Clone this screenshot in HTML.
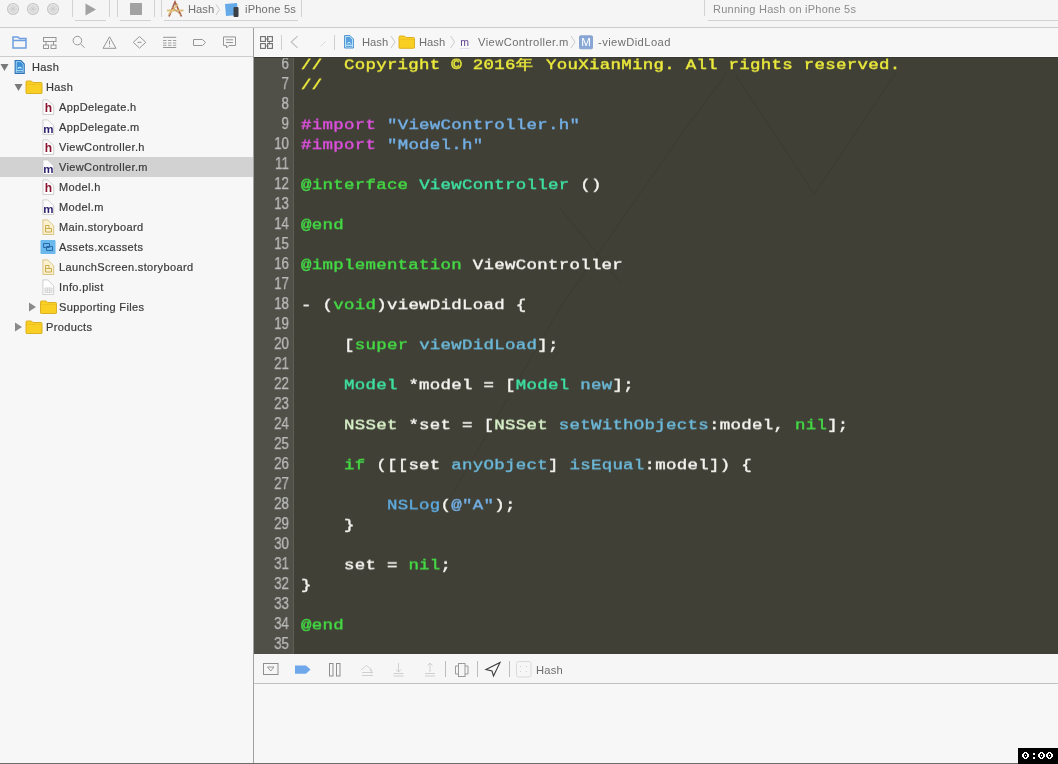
<!DOCTYPE html>
<html><head><meta charset="utf-8">
<style>
*{margin:0;padding:0;box-sizing:border-box}
html,body{width:1058px;height:764px;overflow:hidden;background:#f6f6f6;font-family:"Liberation Sans",sans-serif;position:relative;-webkit-font-smoothing:antialiased}
.t,.ln,.code{will-change:transform}
.abs{position:absolute}
svg{position:absolute;left:0;top:0}
#toolbar{left:0;top:0;width:1058px;height:28px;background:#f5f5f5;border-bottom:1px solid #cbcbcb}
#tabs{left:0;top:28px;width:253px;height:29px;background:#f6f6f6;border-bottom:1px solid #cdcdcd}
#jump{left:254px;top:28px;width:804px;height:29px;background:#f7f7f7;border-bottom:1px solid #fbfbfb}
#nav{left:0;top:57px;width:253px;height:706px;background:#f7f7f7}
#sel{left:0;top:157px;width:253px;height:20px;background:#d2d2d2}
#vdiv{left:253px;top:28px;width:1px;height:736px;background:#a2a2a2}
#editor{left:254px;top:57px;width:804px;height:597px;background:#404037;overflow:hidden;border-top:1px solid #393933}
#gutter{left:0;top:-1px;width:40px;height:598px;background:#505048;border-right:1px solid #5e5d56}
#debugbar{left:254px;top:654px;width:804px;height:30px;background:#f6f6f6;border-bottom:1px solid #c1c1c1}
#console{left:254px;top:684px;width:804px;height:79px;background:#f7f7f7}
#bottomline{left:0;top:763px;width:1058px;height:1px;background:#6c6c6c}
.t{position:absolute;font-size:11px;color:#3b3b3b;white-space:pre;line-height:14px}
.nv{letter-spacing:0.37px;color:#3a3a3a;-webkit-text-stroke:0.2px currentColor}
.ln{position:absolute;left:0;font-size:15.6px;color:#bababa;line-height:20px;text-align:right;width:35px;white-space:pre;-webkit-text-stroke:0.25px currentColor;transform:scaleX(0.86);transform-origin:35px 0}
.code{position:absolute;left:47px;font-family:"Liberation Mono",monospace;font-size:17.4px;letter-spacing:0.3px;line-height:22.988505747126435px;color:#f4f4f0;white-space:pre;font-weight:normal;-webkit-text-stroke:0.5px currentColor;transform:scaleY(0.87);transform-origin:0 0}
.cm{color:#ecea3c}.pp{color:#dc50dc}.st{color:#74b0e6}.kw{color:#44da44}.cl{color:#3ee0a0}.sc{color:#d8f0c8}.fn{color:#6cb8d8}.nl{color:#5eaade}
#timer{left:1018px;top:748px;width:40px;height:16px;background:#000}
</style></head><body>
<div id="toolbar" class="abs"></div>
<svg width="1058" height="28" viewBox="0 0 1058 28">
  <g fill="#e4e4e4" stroke="#c6c6c6" stroke-width="1.1">
    <circle cx="13" cy="9" r="5.5"/><circle cx="33" cy="9" r="5.5"/><circle cx="53" cy="9" r="5.5"/>
  </g>
  <g stroke="#cdcdcd" stroke-width="0.9" fill="none">
    <path d="M13 5 V13 M9 9 H17 M10.2 6.2 L15.8 11.8 M15.8 6.2 L10.2 11.8"/>
    <path d="M33 5 V13 M29 9 H37 M30.2 6.2 L35.8 11.8 M35.8 6.2 L30.2 11.8"/>
    <path d="M53 5 V13 M49 9 H57 M50.2 6.2 L55.8 11.8 M55.8 6.2 L50.2 11.8"/>
  </g>
  <g fill="none" stroke="#d2d2d2" stroke-width="1">
    <path d="M72.5 0 V17 M109.5 0 V17 M75 20.5 H106" />
    <path d="M117.5 0 V17 M154.5 0 V17 M120 20.5 H151"/>
    <path d="M161.5 0 V17 M301.5 0 V17 M164 20.5 H298"/>
    <path d="M704.5 0 V16"/><path d="M708 20.5 H1058"/>
  </g>
  <path d="M85.5 3.5 V15.5 L96 9.5 Z" fill="#a2a2a2"/>
  <rect x="130" y="3" width="12" height="12" fill="#a2a2a2"/>
  <!-- app icon -->
  <g transform="translate(167,1)">
    <path d="M2 15.5 L8 1 L14.5 15.5" fill="none" stroke="#a8604a" stroke-width="1.7"/>
    <path d="M0 9.5 H16.5" stroke="#dcb870" stroke-width="1.8"/>
    <path d="M1.5 13.5 L11 3" stroke="#e0c078" stroke-width="1.4"/>
    <path d="M5 6 L14 14" stroke="#c08a60" stroke-width="1"/>
  </g>
  <path d="M216 4.5 L219.5 9.5 L216 15" fill="none" stroke="#c4c4c4" stroke-width="0.9"/>
  <g transform="translate(224,3)">
    <path d="M1 1 L13 0 L14 12 L2 13 Z" fill="#64a9e8"/>
    <rect x="9.5" y="4" width="5" height="10" rx="1" fill="#3b3f46"/>
  </g>
</svg>
<div class="t" style="left:187.5px;top:2.3px;color:#6f6f6f;font-size:11.2px">Hash</div>
<div class="t" style="left:244.5px;top:2.3px;color:#6f6f6f;font-size:11.2px;letter-spacing:0.15px">iPhone 5s</div>
<div class="t" style="left:713px;top:2px;color:#8c8c8c;letter-spacing:0.25px">Running Hash on iPhone 5s</div>

<div id="tabs" class="abs"></div>
<div id="jump" class="abs"></div>
<div id="nav" class="abs"></div>
<div id="sel" class="abs"></div>
<div id="debugbar" class="abs"></div>
<div id="console" class="abs"></div>
<svg width="1058" height="764" viewBox="0 0 1058 764">
  <!-- navigator tabs -->
  <g fill="none" stroke="#6e9fe0" stroke-width="1.5">
    <path d="M13 37 H18 L19.5 38.5 H26 V48 H13 Z M13 40.5 H26"/>
  </g>
  <g fill="none" stroke="#969696" stroke-width="1">
    <rect x="43.5" y="37.5" width="12.5" height="4"/>
    <path d="M46 41.5 V45 M53.5 41.5 V45"/>
    <rect x="43.5" y="45" width="5" height="3.5"/><rect x="51" y="45" width="5" height="3.5"/>
    <circle cx="77.4" cy="40.6" r="4.3"/><path d="M80.5 43.7 L84.5 47.7"/>
    <path d="M109.5 36.8 L116 48.3 H103 Z M109.5 40.5 V44.5 M109.5 45.8 V46.8"/>
    <path d="M139.5 36.5 L145.8 42.3 L139.5 48.1 L133.2 42.3 Z M137.5 42.3 H141.5"/>
    <path d="M163 37.3 H176.2 M163 47.5 H176.2"/>
    <path d="M163 40.5 H166.5 M168 40.5 H171.5 M173 40.5 H176.2 M163 43 H166.5 M168 43 H171.5 M173 43 H176.2 M163 45.3 H166.5 M168 45.3 H171.5 M173 45.3 H176.2" stroke-width="0.9"/>
    <path d="M193.5 39.5 H202.5 L205.5 42.5 L202.5 45.5 H193.5 Z"/>
    <path d="M223.5 36.9 H235.5 V45.5 H229 L226.5 48 V45.5 H223.5 Z M226 39.8 H233 M226 42.5 H233"/>
  </g>
  <!-- jump bar -->
  <g fill="none" stroke="#6e6e6e" stroke-width="1.1">
    <rect x="260.6" y="36.6" width="4.8" height="4.8"/><rect x="267.6" y="36.6" width="4.8" height="4.8"/>
    <rect x="260.6" y="43.6" width="4.8" height="4.8"/><rect x="267.6" y="43.6" width="4.8" height="4.8"/>
    <path d="M265.4 39 H269 M269.4 41.4 V44.5 M265.4 46 H268.5" stroke-width="0.9"/>
  </g>
  <path d="M281.5 35 V50 M334.5 35 V50" stroke="#cfcfcf" stroke-width="1"/>
  <path d="M297.5 36.2 L291.2 42 L297.5 47.8" fill="none" stroke="#bdbdbd" stroke-width="1.1"/>
  <path d="M320.5 46.5 L326 41" fill="none" stroke="#dddddd" stroke-width="1"/>
  <g transform="translate(344,35)">
    <path d="M0.6 0.6 H6 L9.4 4 V13 H0.6 Z" fill="#c4ecf8" stroke="#4a8fd0" stroke-width="1"/>
    <path d="M2 2 H5.8 L8 4.2 V9.8 H2 Z" fill="#5aa0e0"/><path d="M3.2 8.4 Q5 6.2 6.8 8.4" fill="none" stroke="#d0f2fc" stroke-width="1"/>
    <path d="M2 11.4 H8" stroke="#4a8fd0" stroke-width="0.9"/>
  </g>
  <path d="M391 36 L395 42 L391 48" fill="none" stroke="#c4c4c4" stroke-width="0.9"/>
  <g transform="translate(399,35.5)"><path d="M0 1.5 Q0 0.5 1 0.5 H5.5 L7 2 H14.5 Q15.5 2 15.5 3 V12.3 Q15.5 12.8 14.5 12.8 H1 Q0 12.8 0 12.3 Z" fill="#f9cf24" stroke="#d8aa18" stroke-width="0.9"/><path d="M0.6 4 H14.9" stroke="#f0c020" stroke-width="0.8"/></g>
  <path d="M450.6 36 L454.6 42 L450.6 48" fill="none" stroke="#c4c4c4" stroke-width="0.9"/>
  <text x="464.5" y="46" font-family="Liberation Sans" font-size="10.5" fill="#5a3f8c" text-anchor="middle">m</text>
  <path d="M459.5 48.5 H469.5" stroke="#e2dcec" stroke-width="1"/>
  <path d="M571 36 L575 42 L571 48" fill="none" stroke="#c4c4c4" stroke-width="0.9"/>
  <rect x="579.5" y="35.8" width="13" height="13" rx="1" fill="#8aa8d6" stroke="#7b98c8" stroke-width="0.8"/>
  <text x="586" y="46.3" font-family="Liberation Sans" font-size="11.5" fill="#ffffff" text-anchor="middle">M</text>
  <!-- nav rows -->
  <path d="M0.5 64 H8.5 L4.5 71 Z" fill="#7a7a7a"/><g transform="translate(14.6,60)"><path d="M0.6 0.6 H6.2 L9.6 4 V13.4 H0.6 Z" fill="#b4e8f8" stroke="#2f72bc" stroke-width="1.2"/><path d="M2 2 H6 L8.2 4.2 V10.2 H2 Z" fill="#3f8fd8"/><path d="M3.3 8.6 Q5.1 6.2 6.9 8.6" fill="none" stroke="#c0eefa" stroke-width="1.1"/><path d="M2 11.8 H8.2" stroke="#2f72bc" stroke-width="1"/></g><path d="M14.5 84 H22.5 L18.5 91 Z" fill="#7a7a7a"/><g transform="translate(26,80.5)"><path d="M0 1.5 Q0 0.5 1 0.5 H5.5 L7 2 H15 Q16 2 16 3 V12.5 Q16 13 15 13 H1 Q0 13 0 12.5 Z" fill="#f9cf24" stroke="#d8aa18" stroke-width="0.9"/><path d="M0.6 4 H15.4" stroke="#f0c020" stroke-width="0.8"/></g><g transform="translate(42.5,99.5)"><path d="M0.4 0.4 H5.2 L11.2 6.4 V15 H0.4 Z" fill="#fefefe" stroke="#c4c4c4" stroke-width="0.8"/><text x="5.9" y="12.3" font-family="Liberation Sans" font-weight="bold" font-size="12" fill="#8a1430" text-anchor="middle">h</text></g><g transform="translate(42.5,119.5)"><path d="M0.4 0.4 H5.2 L11.2 6.4 V15 H0.4 Z" fill="#fefefe" stroke="#c4c4c4" stroke-width="0.8"/><text x="5.9" y="13.1" font-family="Liberation Sans" font-weight="bold" font-size="11.5" fill="#2c1f6e" text-anchor="middle">m</text></g><g transform="translate(42.5,139.5)"><path d="M0.4 0.4 H5.2 L11.2 6.4 V15 H0.4 Z" fill="#fefefe" stroke="#c4c4c4" stroke-width="0.8"/><text x="5.9" y="12.3" font-family="Liberation Sans" font-weight="bold" font-size="12" fill="#8a1430" text-anchor="middle">h</text></g><g transform="translate(42.5,159.5)"><path d="M0.4 0.4 H5.2 L11.2 6.4 V15 H0.4 Z" fill="#fefefe" stroke="#c4c4c4" stroke-width="0.8"/><text x="5.9" y="13.1" font-family="Liberation Sans" font-weight="bold" font-size="11.5" fill="#2c1f6e" text-anchor="middle">m</text></g><g transform="translate(42.5,179.5)"><path d="M0.4 0.4 H5.2 L11.2 6.4 V15 H0.4 Z" fill="#fefefe" stroke="#c4c4c4" stroke-width="0.8"/><text x="5.9" y="12.3" font-family="Liberation Sans" font-weight="bold" font-size="12" fill="#8a1430" text-anchor="middle">h</text></g><g transform="translate(42.5,199.5)"><path d="M0.4 0.4 H5.2 L11.2 6.4 V15 H0.4 Z" fill="#fefefe" stroke="#c4c4c4" stroke-width="0.8"/><text x="5.9" y="13.1" font-family="Liberation Sans" font-weight="bold" font-size="11.5" fill="#2c1f6e" text-anchor="middle">m</text></g><g transform="translate(42.5,219.5)"><path d="M0.4 0.4 H5.2 L11.2 6.4 V15 H0.4 Z" fill="#fbf1cf" stroke="#d6c07a" stroke-width="0.9"/><path d="M3 6 H6.5 V9 H9 V12.5 H3 Z M3 9 H6.5" fill="none" stroke="#c7a440" stroke-width="0.9"/></g><g transform="translate(40.5,240)"><rect x="0" y="0" width="15" height="14" rx="1" fill="#6bb8ec"/><path d="M3 3.5 H9 V7.5 H3 Z M6 6.5 H12 V10.5 H6 Z" fill="none" stroke="#2a6aa8" stroke-width="1"/></g><g transform="translate(42.5,259.5)"><path d="M0.4 0.4 H5.2 L11.2 6.4 V15 H0.4 Z" fill="#fbf1cf" stroke="#d6c07a" stroke-width="0.9"/><path d="M3 6 H6.5 V9 H9 V12.5 H3 Z M3 9 H6.5" fill="none" stroke="#c7a440" stroke-width="0.9"/></g><g transform="translate(42.5,279.5)"><path d="M0.4 0.4 H5.2 L11.2 6.4 V15 H0.4 Z" fill="#fefefe" stroke="#c4c4c4" stroke-width="0.8"/><path d="M2.5 8.5 H9.5 V13 H2.5 Z M2.5 10.7 H9.5 M4.8 8.5 V13 M7.2 8.5 V13" fill="none" stroke="#c4c4c4" stroke-width="0.7"/></g><path d="M29 302.5 V311.5 L36 307.0 Z" fill="#8a8a8a"/><g transform="translate(40.5,300.5)"><path d="M0 1.5 Q0 0.5 1 0.5 H5.5 L7 2 H15 Q16 2 16 3 V12.5 Q16 13 15 13 H1 Q0 13 0 12.5 Z" fill="#f9cf24" stroke="#d8aa18" stroke-width="0.9"/><path d="M0.6 4 H15.4" stroke="#f0c020" stroke-width="0.8"/></g><path d="M15 322.5 V331.5 L22 327.0 Z" fill="#8a8a8a"/><g transform="translate(26,320.5)"><path d="M0 1.5 Q0 0.5 1 0.5 H5.5 L7 2 H15 Q16 2 16 3 V12.5 Q16 13 15 13 H1 Q0 13 0 12.5 Z" fill="#f9cf24" stroke="#d8aa18" stroke-width="0.9"/><path d="M0.6 4 H15.4" stroke="#f0c020" stroke-width="0.8"/></g>
  <!-- debug bar -->
  <g fill="none" stroke="#8f8f8f" stroke-width="1">
    <rect x="263.5" y="663.5" width="14.5" height="11"/>
    <path d="M267.5 667 H274 L270.75 671 Z" stroke-width="0.9"/>
    <rect x="329.5" y="663.5" width="3.5" height="12.5"/><rect x="336.5" y="663.5" width="3.5" height="12.5"/>
    <path d="M445.5 661 V677 M477.5 661 V677 M509.5 661 V677" stroke="#bdbdbd"/>
    <path d="M455.5 666 H458.5 M465 666 H468 M455.5 666 V674 H458.5 M468 666 V674 H465" stroke="#9a9a9a"/>
    <rect x="458.5" y="663.5" width="6.5" height="13" stroke="#9a9a9a"/>
    <path d="M486 669.5 L500 662.5 L493.5 676 L492 671 Z" stroke="#3c3c3c" stroke-width="1.1"/>
  </g>
  <path d="M295 665.5 H306 L310.5 669.5 L306 673.7 H295 Z" fill="#6fa8ea"/>
  <g fill="none" stroke="#cfcfcf" stroke-width="1">
    <path d="M361 670 L366.5 665.5 L372 670 M369.5 670 L372 671 L371 673.5"/>
    <path d="M362 672.5 H373 M362 675.5 H373"/>
    <path d="M398.5 663 V672 M396 669.5 L398.5 672 L401 669.5 M393.5 673.5 H403.5 M393.5 676 H403.5"/>
    <path d="M430 663 V672 M427.5 665.5 L430 663 L432.5 665.5 M425 673.5 H435 M425 676 H435"/>
  </g>
  <rect x="516.5" y="661.5" width="14.5" height="15.5" rx="2" fill="none" stroke="#dadada" stroke-width="1"/>
  <path d="M520 666 l1 1 M527 666 l-1 1 M520 672 l1 -1 M527 672 l-1 -1" stroke="#d0d0d0" stroke-width="1"/>
</svg>
<div class="t" style="left:361.5px;top:35px;color:#6f6f6f;font-size:11.2px">Hash</div>
<div class="t" style="left:419.2px;top:35px;color:#6f6f6f;font-size:11.2px">Hash</div>
<div class="t" style="left:477.5px;top:35px;color:#6f6f6f;font-size:11.2px;letter-spacing:0.4px">ViewController.m</div>
<div class="t" style="left:598px;top:35px;color:#6f6f6f;font-size:11.2px;letter-spacing:0.42px">-viewDidLoad</div>
<div class="t nv" style="left:31.5px;top:60px">Hash</div>
<div class="t nv" style="left:45.5px;top:80px">Hash</div>
<div class="t nv" style="left:59.3px;top:100px">AppDelegate.h</div>
<div class="t nv" style="left:59.3px;top:120px">AppDelegate.m</div>
<div class="t nv" style="left:59.3px;top:140px">ViewController.h</div>
<div class="t nv" style="left:59.3px;top:160px">ViewController.m</div>
<div class="t nv" style="left:59.3px;top:180px">Model.h</div>
<div class="t nv" style="left:59.3px;top:200px">Model.m</div>
<div class="t nv" style="left:59.3px;top:220px">Main.storyboard</div>
<div class="t nv" style="left:59.3px;top:240px">Assets.xcassets</div>
<div class="t nv" style="left:59.3px;top:260px">LaunchScreen.storyboard</div>
<div class="t nv" style="left:59.3px;top:280px">Info.plist</div>
<div class="t nv" style="left:59.3px;top:300px">Supporting Files</div>
<div class="t nv" style="left:45.5px;top:320px">Products</div>

<div id="vdiv" class="abs"></div>
<div id="editor" class="abs">
  <div id="gutter" class="abs"></div>
  <svg width="804" height="597" viewBox="254 57 804 597" style="left:0;top:-1px"><g fill="none" stroke="#000" stroke-opacity="0.065" stroke-width="1.1">
    <polyline points="727,73 683,132 560,308 449,500"/>
    <polyline points="735,74 814,194 896,73"/>
    <polyline points="560,208 620,282"/>
  </g></svg>
  <div class="ln" style="top:-4px">6
7
8
9
10
11
12
13
14
15
16
17
18
19
20
21
22
23
24
25
26
27
28
29
30
31
32
33
34
35</div>
  <div class="code" style="top:-2px"><span class="cm">//  Copyright © 2016<span style="letter-spacing:2.6px">年</span> YouXianMing. All rights reserved.</span>
<span class="cm">//</span>

<span class="pp">#import</span> <span class="st">"ViewController.h"</span>
<span class="pp">#import</span> <span class="st">"Model.h"</span>

<span class="kw">@interface</span> <span class="cl">ViewController</span> ()

<span class="kw">@end</span>

<span class="kw">@implementation</span> ViewController

- (<span class="kw">void</span>)viewDidLoad {

    [<span class="kw">super</span> <span class="fn">viewDidLoad</span>];

    <span class="cl">Model</span> *model = [<span class="cl">Model</span> <span class="fn">new</span>];

    <span class="sc">NSSet</span> *set = [<span class="sc">NSSet</span> <span class="fn">setWithObjects</span>:model, <span class="kw">nil</span>];

    <span class="kw">if</span> ([[set <span class="fn">anyObject</span>] <span class="fn">isEqual</span>:model]) {

        <span class="nl">NSLog</span>(<span class="st">@"A"</span>);
    }

    set = <span class="kw">nil</span>;
}

<span class="kw">@end</span>
</div>
</div>
<div class="t" style="left:535.8px;top:662.5px;color:#6f6f6f;font-size:11.2px;letter-spacing:0.2px">Hash</div>
<div id="bottomline" class="abs"></div>
<div id="timer" class="abs"></div>
<svg width="1058" height="764" viewBox="0 0 1058 764" shape-rendering="crispEdges"><g fill="#fff"><rect x="1024" y="752" width="1" height="1"/><rect x="1025" y="752" width="1" height="1"/><rect x="1026" y="752" width="1" height="1"/><rect x="1023" y="753" width="1" height="1"/><rect x="1024" y="753" width="1" height="1"/><rect x="1026" y="753" width="1" height="1"/><rect x="1027" y="753" width="1" height="1"/><rect x="1022" y="754" width="1" height="1"/><rect x="1023" y="754" width="1" height="1"/><rect x="1027" y="754" width="1" height="1"/><rect x="1028" y="754" width="1" height="1"/><rect x="1022" y="755" width="1" height="1"/><rect x="1023" y="755" width="1" height="1"/><rect x="1025" y="755" width="1" height="1"/><rect x="1027" y="755" width="1" height="1"/><rect x="1028" y="755" width="1" height="1"/><rect x="1022" y="756" width="1" height="1"/><rect x="1023" y="756" width="1" height="1"/><rect x="1027" y="756" width="1" height="1"/><rect x="1028" y="756" width="1" height="1"/><rect x="1023" y="757" width="1" height="1"/><rect x="1024" y="757" width="1" height="1"/><rect x="1026" y="757" width="1" height="1"/><rect x="1027" y="757" width="1" height="1"/><rect x="1024" y="758" width="1" height="1"/><rect x="1025" y="758" width="1" height="1"/><rect x="1026" y="758" width="1" height="1"/><rect x="1040" y="752" width="1" height="1"/><rect x="1041" y="752" width="1" height="1"/><rect x="1042" y="752" width="1" height="1"/><rect x="1039" y="753" width="1" height="1"/><rect x="1040" y="753" width="1" height="1"/><rect x="1042" y="753" width="1" height="1"/><rect x="1043" y="753" width="1" height="1"/><rect x="1038" y="754" width="1" height="1"/><rect x="1039" y="754" width="1" height="1"/><rect x="1043" y="754" width="1" height="1"/><rect x="1044" y="754" width="1" height="1"/><rect x="1038" y="755" width="1" height="1"/><rect x="1039" y="755" width="1" height="1"/><rect x="1041" y="755" width="1" height="1"/><rect x="1043" y="755" width="1" height="1"/><rect x="1044" y="755" width="1" height="1"/><rect x="1038" y="756" width="1" height="1"/><rect x="1039" y="756" width="1" height="1"/><rect x="1043" y="756" width="1" height="1"/><rect x="1044" y="756" width="1" height="1"/><rect x="1039" y="757" width="1" height="1"/><rect x="1040" y="757" width="1" height="1"/><rect x="1042" y="757" width="1" height="1"/><rect x="1043" y="757" width="1" height="1"/><rect x="1040" y="758" width="1" height="1"/><rect x="1041" y="758" width="1" height="1"/><rect x="1042" y="758" width="1" height="1"/><rect x="1048" y="752" width="1" height="1"/><rect x="1049" y="752" width="1" height="1"/><rect x="1050" y="752" width="1" height="1"/><rect x="1047" y="753" width="1" height="1"/><rect x="1048" y="753" width="1" height="1"/><rect x="1050" y="753" width="1" height="1"/><rect x="1051" y="753" width="1" height="1"/><rect x="1046" y="754" width="1" height="1"/><rect x="1047" y="754" width="1" height="1"/><rect x="1051" y="754" width="1" height="1"/><rect x="1052" y="754" width="1" height="1"/><rect x="1046" y="755" width="1" height="1"/><rect x="1047" y="755" width="1" height="1"/><rect x="1049" y="755" width="1" height="1"/><rect x="1051" y="755" width="1" height="1"/><rect x="1052" y="755" width="1" height="1"/><rect x="1046" y="756" width="1" height="1"/><rect x="1047" y="756" width="1" height="1"/><rect x="1051" y="756" width="1" height="1"/><rect x="1052" y="756" width="1" height="1"/><rect x="1047" y="757" width="1" height="1"/><rect x="1048" y="757" width="1" height="1"/><rect x="1050" y="757" width="1" height="1"/><rect x="1051" y="757" width="1" height="1"/><rect x="1048" y="758" width="1" height="1"/><rect x="1049" y="758" width="1" height="1"/><rect x="1050" y="758" width="1" height="1"/><rect x="1033" y="753" width="2" height="2"/><rect x="1033" y="757" width="2" height="2"/></g></svg>
</body></html>
